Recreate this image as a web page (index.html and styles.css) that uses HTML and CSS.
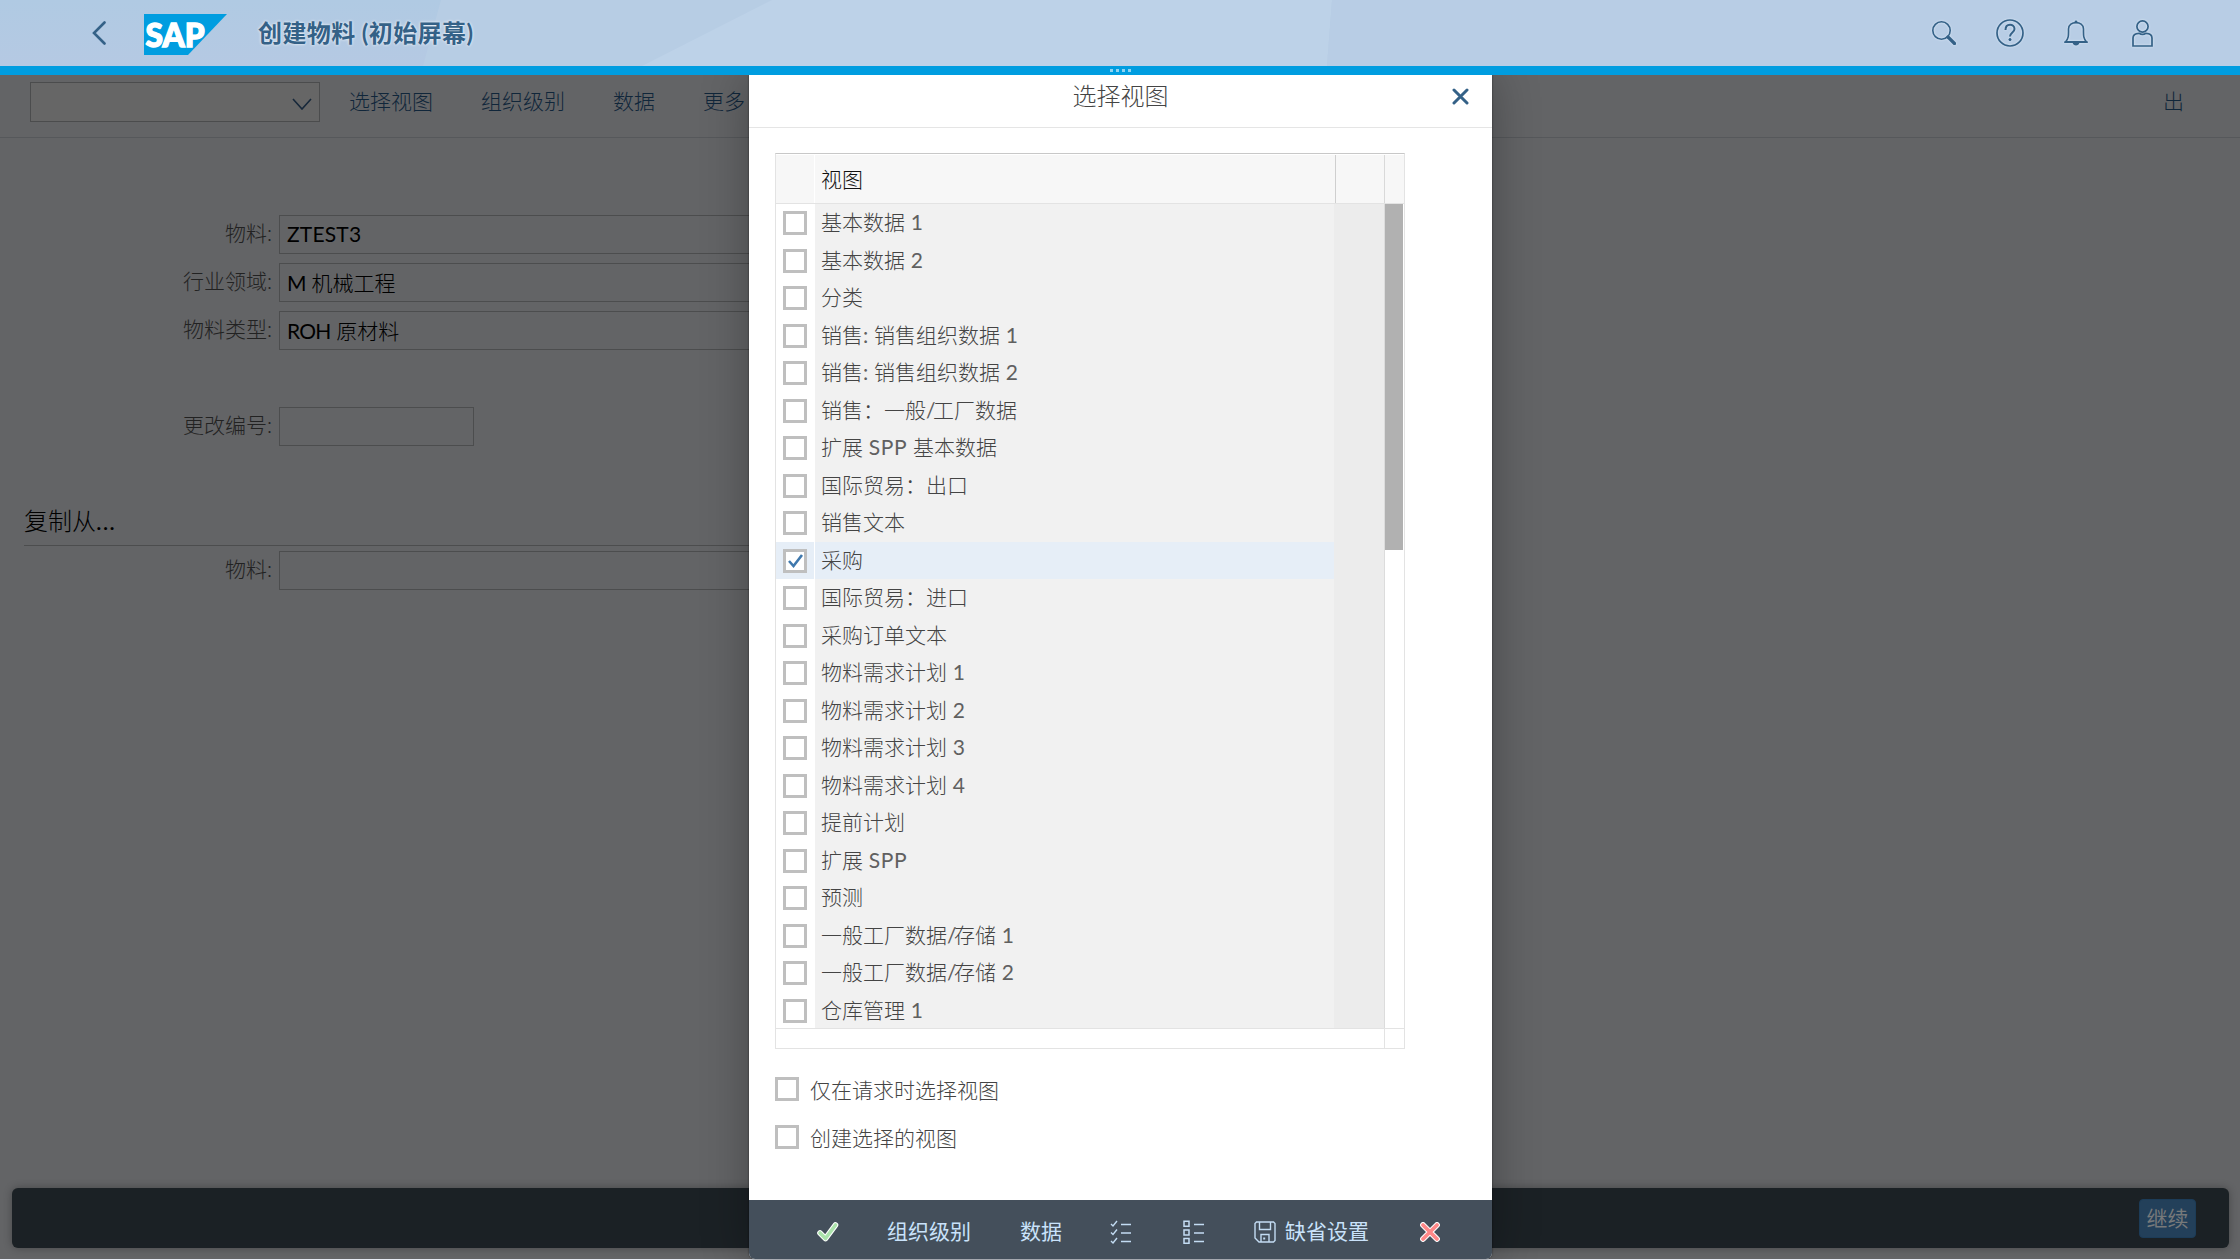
FILE: index.html
```html
<!DOCTYPE html>
<html lang="zh-CN">
<head>
<meta charset="utf-8">
<title>创建物料 (初始屏幕)</title>
<link rel="stylesheet" href="styles.css">
</head>
<body>
<div class="page">
  <header class="shell">
    <svg class="shell-bg" viewBox="0 0 2240 66" preserveAspectRatio="none"><path d="M441 0H1332V66H423Z" fill="#b7cde4"/><path d="M642 66L772 0H1332L1327 66Z" fill="#bdd2e8"/><path d="M1332 0H2240V66H1327Z" fill="#b8cde5"/></svg>
    <svg class="back" viewBox="0 0 14 24" fill="none" stroke="#346187" stroke-width="2.6" stroke-linecap="round"><path d="M12.500 1.500L2 12L12.500 22.500"/></svg>
    <svg class="logo" viewBox="0 0 83 41"><path d="M0 0H83L44 41H0Z" fill="#009de0"/><text x="1.500" y="33" textLength="59" lengthAdjust="spacingAndGlyphs" class="logo-text">SAP</text></svg>
    <h1 class="shell-title">创建物料 (初始屏幕)</h1>
    <div class="shell-actions">
      <svg class="ic-search" viewBox="0 0 24 24" fill="none" stroke="#346187"><circle cx="9.500" cy="9.500" r="8.700" stroke-width="1.600"/><path d="M16 16L22.500 22.500" stroke-width="3.200" stroke-linecap="round"/></svg>
      <svg class="ic-help" viewBox="0 0 28 28" fill="none" stroke="#346187"><circle cx="14" cy="14" r="13" stroke-width="1.700"/><path d="M9.500 11C9.500 4 18.500 4.500 18.500 10C18.500 13.500 14 13.500 14 17.500" stroke-width="2"/><circle cx="14" cy="20.600" r="1.100" fill="#346187"/></svg>
      <svg class="ic-bell" viewBox="0 0 24 26" fill="none" stroke="#346187" stroke-width="1.600"><path d="M1.500 22C5 18 4.500 15 4.500 9C4.500 0.500 19.500 0.500 19.500 9C19.500 15 19 18 22.500 22Z"/><path d="M.5 22H23.500" stroke-width="2"/><path d="M8.500 22.500H15.500C15 26.500 9 26.500 8.500 22.500Z" fill="#346187" stroke="none"/><circle cx="12" cy="1.800" r="1.400" fill="#346187" stroke="none"/></svg>
      <svg class="ic-user" viewBox="0 0 21 27" fill="none" stroke="#346187" stroke-width="1.700"><circle cx="10.500" cy="6.500" r="5.600"/><path d="M1 26V18C1 15 3.500 13.500 7 13.300C9 14.500 12 14.500 14 13.300C17.500 13.500 20 15 20 18V26Z"/></svg>
    </div>
  </header>
  <div class="strip"><i></i><i></i><i></i><i></i></div>

  <main class="app">
    <nav class="toolbar">
      <div class="combo"><svg viewBox="0 0 20 12" fill="none" stroke="#17283a" stroke-width="1.600"><path d="M1 1L10 11L19 1"/></svg></div>
      <span class="cmd c1">选择视图</span><span class="cmd c2">组织级别</span><span class="cmd c3">数据</span><span class="cmd c4">更多</span>
      <span class="cmd exit">出</span>
    </nav>
    <section class="form">
      <div class="field"><label>物料:</label><div class="input code"><span class="lat">ZTEST3</span></div></div>
      <div class="field"><label>行业领域:</label><div class="input"><span class="lat tight">M</span> 机械工程</div></div>
      <div class="field"><label>物料类型:</label><div class="input"><span class="lat tight">ROH</span> 原材料</div></div>
      <div class="field change"><label>更改编号:</label><div class="input short"></div></div>
      <h2 class="group">复制从<span class="dots">...</span></h2>
      <div class="field"><label>物料:</label><div class="input"></div></div>
    </section>
    <footer class="footbar"><button class="go">继续</button></footer>
  </main>

  <section class="dialog">
    <div class="dlg-head"><span>选择视图</span><svg class="close" viewBox="0 0 17 17" stroke="#346187" stroke-width="3" stroke-linecap="round"><path d="M2 2L15 15M15 2L2 15"/></svg></div>
    <div class="table">
      <div class="thead"><div class="h-sel"></div><div class="h-view">视图</div><div class="h-fill"></div><div class="h-scroll"></div></div>
      <div class="tbody">
        <div class="rows">
          <div class="row"><div class="sel"><b class="box"></b></div><div class="name">基本数据 <span class="lat">1</span></div></div>
          <div class="row"><div class="sel"><b class="box"></b></div><div class="name">基本数据 <span class="lat">2</span></div></div>
          <div class="row"><div class="sel"><b class="box"></b></div><div class="name">分类</div></div>
          <div class="row"><div class="sel"><b class="box"></b></div><div class="name">销售<span class="lat">:</span> 销售组织数据 <span class="lat">1</span></div></div>
          <div class="row"><div class="sel"><b class="box"></b></div><div class="name">销售<span class="lat">:</span> 销售组织数据 <span class="lat">2</span></div></div>
          <div class="row"><div class="sel"><b class="box"></b></div><div class="name">销售：一般<span class="lat slash">/</span>工厂数据</div></div>
          <div class="row"><div class="sel"><b class="box"></b></div><div class="name">扩展 <span class="lat wide">SPP</span> 基本数据</div></div>
          <div class="row"><div class="sel"><b class="box"></b></div><div class="name">国际贸易：出口</div></div>
          <div class="row"><div class="sel"><b class="box"></b></div><div class="name">销售文本</div></div>
          <div class="row on"><div class="sel"><b class="box"><svg viewBox="0 0 18 18" fill="none" stroke="#3f78ad" stroke-width="2.600"><path d="M3 9L7.500 14L16 3"/></svg></b></div><div class="name">采购</div></div>
          <div class="row"><div class="sel"><b class="box"></b></div><div class="name">国际贸易：进口</div></div>
          <div class="row"><div class="sel"><b class="box"></b></div><div class="name">采购订单文本</div></div>
          <div class="row"><div class="sel"><b class="box"></b></div><div class="name">物料需求计划 <span class="lat">1</span></div></div>
          <div class="row"><div class="sel"><b class="box"></b></div><div class="name">物料需求计划 <span class="lat">2</span></div></div>
          <div class="row"><div class="sel"><b class="box"></b></div><div class="name">物料需求计划 <span class="lat">3</span></div></div>
          <div class="row"><div class="sel"><b class="box"></b></div><div class="name">物料需求计划 <span class="lat">4</span></div></div>
          <div class="row"><div class="sel"><b class="box"></b></div><div class="name">提前计划</div></div>
          <div class="row"><div class="sel"><b class="box"></b></div><div class="name">扩展 <span class="lat wide">SPP</span></div></div>
          <div class="row"><div class="sel"><b class="box"></b></div><div class="name">预测</div></div>
          <div class="row"><div class="sel"><b class="box"></b></div><div class="name">一般工厂数据<span class="lat slash">/</span>存储 <span class="lat">1</span></div></div>
          <div class="row"><div class="sel"><b class="box"></b></div><div class="name">一般工厂数据<span class="lat slash">/</span>存储 <span class="lat">2</span></div></div>
          <div class="row"><div class="sel"><b class="box"></b></div><div class="name">仓库管理 <span class="lat">1</span></div></div>
        </div>
        <div class="fill"></div>
        <div class="scroll"><div class="thumb"></div></div>
      </div>
      <div class="tfoot"><div class="f-main"></div><div class="f-corner"></div></div>
    </div>
    <div class="options">
      <div class="option"><b class="box"></b><span>仅在请求时选择视图</span></div>
      <div class="option"><b class="box"></b><span>创建选择的视图</span></div>
    </div>
    <div class="dlg-foot">
      <svg class="ok" viewBox="0 0 22 20" fill="none" stroke-linecap="round" stroke-linejoin="round"><path d="M3 11L8.500 16.500L18.500 3" stroke="#fff" stroke-width="5.600"/><path d="M3 11L8.500 16.500L18.500 3" stroke="#abe2ab" stroke-width="3.600"/></svg>
      <span class="org">组织级别</span>
      <span class="data">数据</span>
      <svg class="list1" viewBox="0 0 22 24" fill="none" stroke="#c3dcf3" stroke-width="1.400"><path d="M1 4L3 6L7 1M1 12.500L3 14.500L7 9.500M1 21L3 23L7 18"/><path d="M11 4.500H21M11 13H21M11 21.500H21" stroke-width="1.600"/></svg>
      <svg class="list2" viewBox="0 0 22 24" fill="none" stroke="#c3dcf3" stroke-width="1.500"><path d="M1 1.300H6V6.300H1ZM1 10H6V15H1ZM1 18.500H6V23.300H1Z"/><path d="M11 4.500H21M11 13H21M11 21.500H21" stroke-width="1.600"/></svg>
      <svg class="save" viewBox="0 0 22 22" fill="none" stroke="#c3dcf3" stroke-width="1.400"><path d="M2.500 1H19.500L21 2.500V19.500L19.500 21H5L1 17V2.500Z"/><path d="M5.500 1V8.500H16.500V1M7 21V13.500H15V21"/><path d="M10.200 16.500V18.500" stroke-width="2"/></svg>
      <span class="default">缺省设置</span>
      <svg class="cancel" viewBox="0 0 20 20" fill="none" stroke-linecap="round"><path d="M3 3L17 17M17 3L3 17" stroke="#fff" stroke-width="5.800"/><path d="M3 3L17 17M17 3L3 17" stroke="#ff8888" stroke-width="3.800"/></svg>
    </div>
  </section>
</div>
</body>
</html>
```

FILE: styles.css
```css
* { box-sizing: border-box; }
body { margin: 0; font-family: Lato, "Noto Sans CJK SC", sans-serif; font-size: 21px; color: #666; }
svg { display: block; flex: none; }
.page { position: relative; width: 2240px; height: 1260px; overflow: hidden; background: #e6eaf3; display: flex; flex-direction: column; }
.lat { font-weight: 400; }

/* shell bar */
.shell { position: relative; height: 66px; flex: none; display: flex; align-items: center; padding-left: 92px; background: linear-gradient(#b0cae3, #b5c9e3); }
.shell-bg { position: absolute; inset: 0; width: 100%; height: 100%; }
.back, .logo, .shell-title, .shell-actions { position: relative; }
.back { width: 14px; height: 24px; }
.logo { width: 83px; height: 41px; margin: 3px 0 0 38px; }
.logo-text { font: 900 33px Lato, sans-serif; fill: #fff; stroke: #fff; stroke-width: 1.4; }
.shell-title { margin: -1px 0 0 31px; font-size: 24px; line-height: 30px; font-weight: 700; letter-spacing: .4px; color: #346187; text-shadow: 0 0 3px #fff; white-space: nowrap; }
.shell-actions { margin-left: auto; padding-right: 87px; display: flex; align-items: center; filter: drop-shadow(0 0 1px #e0ecf8); }
.ic-search { width: 24px; height: 24px; }
.ic-help { width: 28px; height: 28px; margin-left: 40px; }
.ic-bell { width: 24px; height: 26px; margin-left: 40px; }
.ic-user { width: 21px; height: 27px; margin-left: 44px; }
.strip { height: 9px; flex: none; background: #009de0; display: flex; justify-content: center; gap: 3px; padding-top: 3px; padding-left: 1px; }
.strip i { width: 3px; height: 3px; background: #8ed3f2; }

/* page behind the dialog */
.app { height: 1184px; flex: none; background: #636466; display: flex; flex-direction: column; }
.toolbar { height: 63px; flex: none; border-bottom: 1px solid #56585b; display: flex; align-items: center; padding: 0 56px 8px 30px; color: #10263a; font-weight: 300; }
.combo { width: 290px; height: 40px; border: 1px solid #4b4c4d; background: #666; display: flex; justify-content: flex-end; align-items: center; padding: 3px 7px 0 0; }
.combo svg { width: 20px; height: 12px; }
.cmd { line-height: 30px; margin-top: -2px; }
.c1 { margin-left: 29px; }
.c2 { margin-left: 48px; }
.c3 { margin-left: 48px; }
.c4 { margin-left: 48px; }
.exit { margin-left: auto; }
.form { flex: 1; padding: 77px 0 0 24px; }
.field { display: flex; align-items: center; height: 39px; margin-bottom: 9px; }
.field label { width: 248px; text-align: right; color: #222; font-weight: 300; margin-top: -5px; }
.input { width: 800px; height: 39px; margin-left: 7px; padding-left: 7px; border: 1px solid #4c4d4e; line-height: 37px; color: #000; font-weight: 300; }
.input.code { letter-spacing: .2px; line-height: 35px; }
.input .tight { letter-spacing: -.8px; }
.input.short { width: 195px; }
.field.change { margin-top: 57px; }
.group { margin: 0 0 5px; padding-top: 51px; width: 1200px; height: 91px; border-bottom: 1px solid #4c4d4e; font-size: 24px; line-height: 30px; font-weight: 300; color: #000; }
.dots { font-weight: 400; letter-spacing: 1px; }
.footbar { height: 60px; margin: 0 11px 11px 12px; padding: 11px 33px 0 0; background: #1b2125; border-radius: 6px; display: flex; justify-content: flex-end; align-items: flex-start; box-shadow: 0 0 8px rgba(0,0,0,.3); }
.go { width: 57px; height: 39px; padding: 0; border: 1px solid #1c3c58; border-radius: 4px; background: #23405a; color: #77797a; font: 400 21px/34px Lato, "Noto Sans CJK SC", sans-serif; padding-bottom: 2px; }

/* dialog */
.dialog { position: absolute; left: 749px; top: 75px; width: 743px; height: 1184px; background: #fff; border-radius: 0 0 6px 6px; box-shadow: 0 0 48px rgba(0,0,0,.3), 0 0 2px rgba(0,0,0,.6); clip-path: inset(0 -120px -1px -120px); display: flex; flex-direction: column; }
.dlg-head { height: 53px; flex: none; border-bottom: 1px solid #e5e5e5; display: grid; grid-template-columns: 1fr auto 1fr; align-items: center; padding-bottom: 10px; font-size: 24px; line-height: 30px; font-weight: 300; color: #444; }
.dlg-head span { grid-column: 2; margin-top: -1px; }
.close { width: 17px; height: 17px; justify-self: end; margin: 0 23px 0 0; }
.table { width: 630px; margin: 25px 0 0 26px; border: 1px solid #e3e3e3; border-top-color: #c8c8c8; }
.thead { height: 50px; display: flex; border-bottom: 1px solid #e3e3e3; background: #f7f7f7; border-top: 1px solid #fff; color: #111; }
.h-sel { width: 39px; border-right: 1px solid #fff; }
.h-view { width: 521px; padding-left: 6px; line-height: 47px; border-right: 1px solid #cfcfcf; font-weight: 300; }
.h-fill { width: 49px; border-right: 1px solid #d9d9d9; }
.tbody { display: flex; height: 824px; overflow: hidden; }
.rows { width: 558px; }
.row { display: flex; height: 37.5px; }
.sel { width: 38px; margin-right: 1px; padding: 7px 0 0 7px; }
.name { flex: 1; background: #f1f1f1; padding-left: 6px; line-height: 36px; }
.row.on .sel, .row.on .name { background: #e6eef7; }
.box { display: block; flex: none; width: 24px; height: 24px; border: 3px solid #bfbfbf; background: #fff; }
.box svg { width: 18px; height: 18px; }
.fill { width: 51px; background: #ececec; border-right: 1px solid #dcdcdc; }
.scroll { width: 18px; }
.thumb { height: 346px; background: #b1b1b1; }
.tfoot { height: 20px; display: flex; border-top: 1px solid #e3e3e3; }
.f-main { width: 609px; border-right: 1px solid #e3e3e3; }
.options { padding: 28px 0 0 26px; display: flex; flex-direction: column; gap: 24px; }
.option { display: flex; align-items: center; height: 24px; gap: 11px; }
.name, .option { font-weight: 300; color: #444; white-space: nowrap; }
.name .lat { color: #606060; }
.name .wide { letter-spacing: .7px; }
.name .slash { letter-spacing: -2.5px; }
.dlg-foot { margin-top: auto; height: 59px; background: #444f5b; border-radius: 0 0 6px 6px; display: flex; align-items: center; padding: 4px 0 0 68px; color: #c9e2fa; }
.dlg-foot span { margin-top: -3px; }
.ok { width: 22px; height: 20px; }
.org { margin-left: 48px; }
.data { margin-left: 49px; }
.list1 { width: 22px; height: 24px; margin-left: 48px; }
.list2 { width: 22px; height: 24px; margin-left: 51px; }
.save { width: 22px; height: 22px; margin-left: 49px; }
.default { margin-left: 9px; }
.cancel { width: 20px; height: 20px; margin-left: 51px; }
```
